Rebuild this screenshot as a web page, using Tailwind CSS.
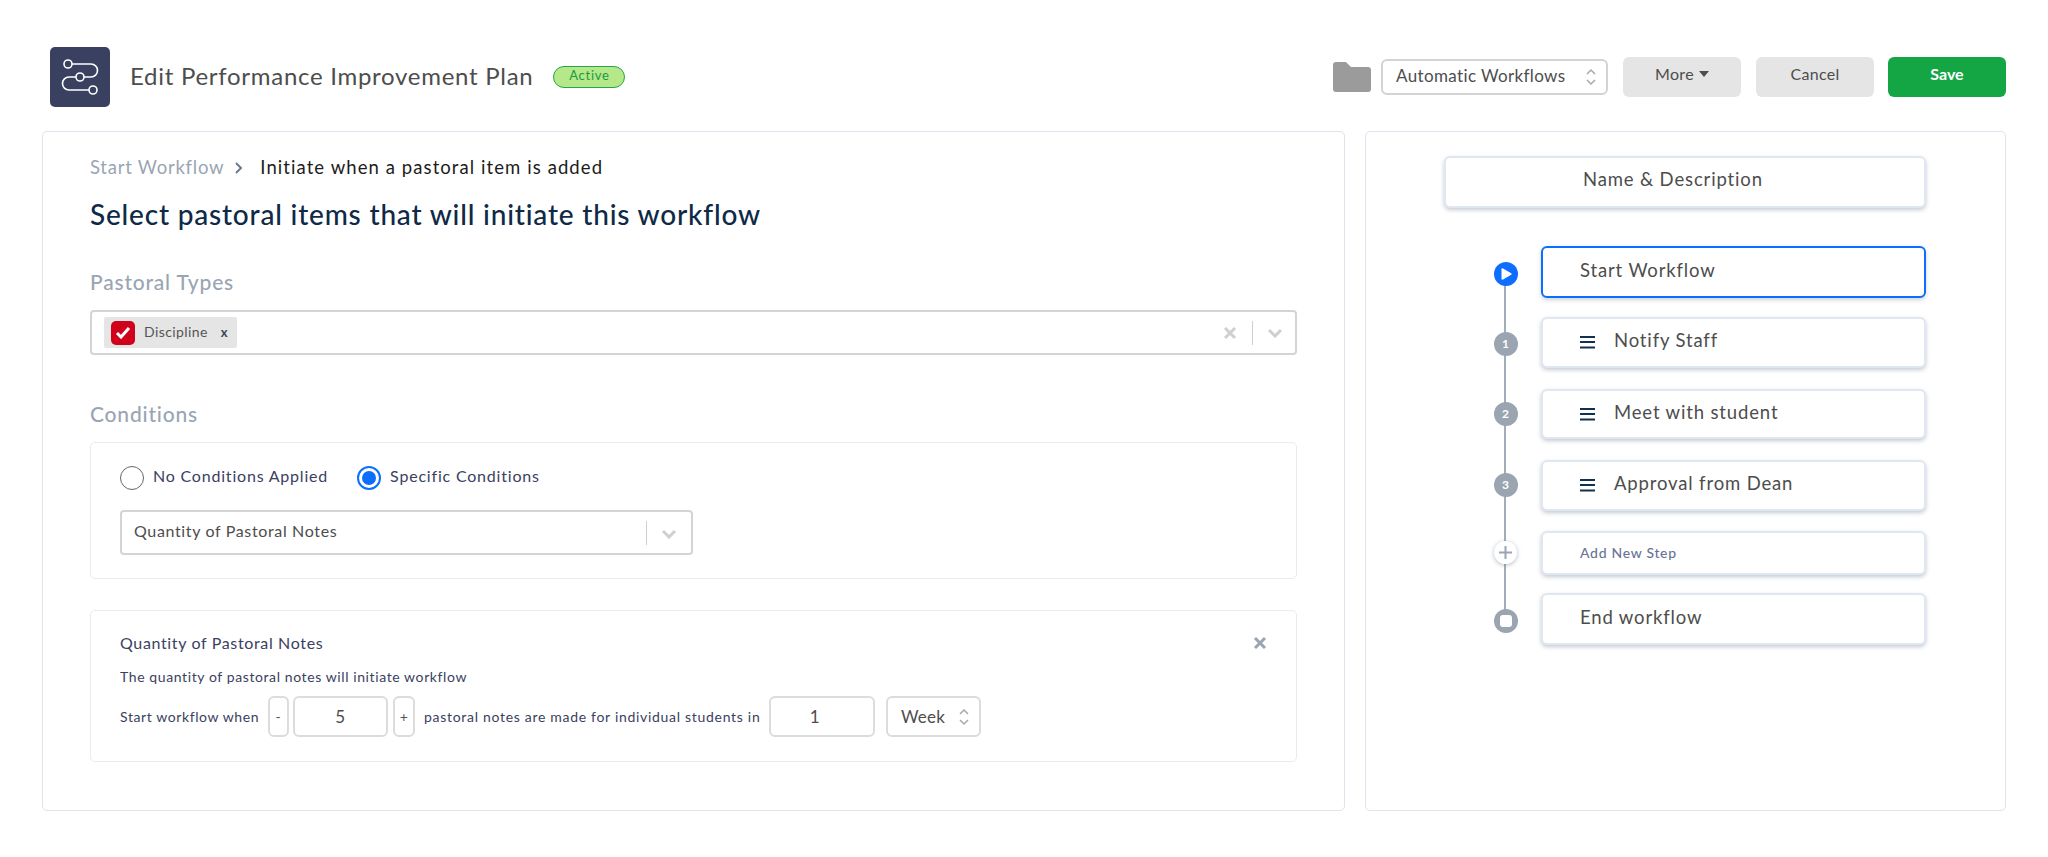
<!DOCTYPE html>
<html lang="en">
<head>
<meta charset="utf-8">
<title>Edit Performance Improvement Plan</title>
<script src="https://cdn.jsdelivr.net/npm/@tailwindcss/browser@4"></script>
</head>
<body class="bg-white font-[Lato,sans-serif] text-[#4a4a4a]">
<div class="w-[2048px] h-[857px] overflow-hidden px-[42px] pt-[47px]">
  <header class="flex items-center h-[60px] mb-[24px]">
    <div class="w-[60px] h-[60px] ml-[8px] rounded-[5px] bg-[#3a4160] flex items-center justify-center shrink-0">
      <svg width="60" height="60" viewBox="0 0 60 60" fill="none" stroke="#fff" stroke-width="1.6"><circle cx="18" cy="17" r="4"/><circle cx="30" cy="30" r="4"/><circle cx="43" cy="43" r="4"/><path d="M22 17H41a6.5 6.5 0 0 1 0 13H34M26 30H19a6.5 6.5 0 0 0 0 13H39"/></svg>
    </div>
    <h1 class="ml-[20px] -mt-[3px] text-[24px] tracking-[0.72px] text-[#4d4d4d] whitespace-nowrap">Edit Performance Improvement Plan</h1>
    <span class="ml-[20px] w-[72px] h-[22px] rounded-full border border-[#22a84a] bg-[#b6e789] text-[#169c43] text-[13px] leading-[17px] tracking-[0.7px] text-center">Active</span>
    <div class="ml-auto flex items-center">
      <svg width="38" height="30" viewBox="0 0 38 30" fill="#9b9b9b"><path d="M0 3a3 3 0 0 1 3-3h10l5 5h17a3 3 0 0 1 3 3v19a3 3 0 0 1-3 3H3a3 3 0 0 1-3-3z"/></svg>
      <div class="ml-[10px] w-[227px] h-[36px] rounded-[6px] border-2 border-[#d3d3d3] flex items-center justify-between pl-[13px] pr-[9px] text-[17px] tracking-[0.37px] text-[#4d4d4d]">
        <span class="-mt-[2px]">Automatic Workflows</span>
        <svg width="12" height="20" viewBox="0 0 12 20" fill="none" stroke="#a8a8a8" stroke-width="1.5"><path d="M2 7l4-4 4 4M2 13l4 4 4-4"/></svg>
      </div>
      <div class="ml-[15px] w-[118px] h-[40px] rounded-[6px] bg-[#e5e5e5] flex items-center justify-center gap-[5px] pb-[6px] text-[16px] tracking-[0.3px] text-[#4d4d4d]">More<svg width="10" height="6" viewBox="0 0 10 6" fill="#4d4d4d"><path d="M0 0h10L5 6z"/></svg></div>
      <div class="ml-[15px] w-[118px] h-[40px] rounded-[6px] bg-[#e5e5e5] flex items-center justify-center pb-[6px] text-[16px] tracking-[0.3px] text-[#4d4d4d]">Cancel</div>
      <div class="ml-[14px] w-[118px] h-[40px] rounded-[6px] bg-[#14a544] flex items-center justify-center pb-[6px] text-[16px] font-bold text-white">Save</div>
    </div>
  </header>

  <div class="flex gap-[20px] h-[680px]">
    <main class="w-[1303px] rounded-[5px] border border-[#dde4ee] pt-[24px] px-[47px]">
      <div class="flex items-center h-[24px] text-[18.5px] tracking-[0.75px] whitespace-nowrap">
        <span class="text-[#9aa5b4]">Start Workflow</span>
        <svg class="ml-[10px] mr-[16px]" width="10" height="14" viewBox="0 0 10 14" fill="none" stroke="#6c7a90" stroke-width="2"><path d="M2 2l5 5-5 5"/></svg>
        <span class="text-[#1c1c1c] tracking-[1.08px]">Initiate when a pastoral item is added</span>
      </div>
      <h2 class="mt-[16px] text-[28px] leading-[36px] tracking-[0.8px] font-medium text-[#0e2a47] whitespace-nowrap">Select pastoral items that will initiate this workflow</h2>

      <div class="mt-[38px] text-[21px] leading-[24px] tracking-[0.8px] font-medium text-[#9aa5b4]">Pastoral Types</div>
      <div class="mt-[16px] h-[45px] rounded-[4px] border-2 border-[#d4d4d4] flex items-center pl-[12px] pr-[12px]">
        <div class="w-[133px] h-[31px] rounded-[2px] bg-[#e5e5e5] flex items-center pl-[7px]">
          <span class="w-[24px] h-[24px] rounded-[5px] bg-[#d0021b] flex items-center justify-center">
            <svg width="16" height="14" viewBox="0 0 16 14" fill="none" stroke="#fff" stroke-width="3"><path d="M2 7l4 4 8-9"/></svg>
          </span>
          <span class="ml-[9px] -mt-[2px] text-[14px] tracking-[0.4px] text-[#555]">Discipline</span>
          <span class="ml-[13px] text-[13px] font-bold text-[#3d4660]">x</span>
        </div>
        <div class="ml-auto flex items-center">
          <svg width="14" height="14" viewBox="0 0 14 14" fill="none" stroke="#cfcfcf" stroke-width="3"><path d="M2 2l10 10M12 2L2 12"/></svg>
          <span class="ml-[15px] w-px h-[24px] bg-[#cfcfcf]"></span>
          <svg class="ml-[14px]" width="16" height="10" viewBox="0 0 16 10" fill="none" stroke="#cfcfcf" stroke-width="3"><path d="M2 2l6 6 6-6"/></svg>
        </div>
      </div>

      <div class="mt-[47px] text-[21px] leading-[24px] tracking-[0.8px] font-medium text-[#9aa5b4]">Conditions</div>
      <section class="mt-[16px] h-[137px] rounded-[5px] border border-[#e8ecf2] pt-[23px] pl-[29px]">
        <div class="flex items-center h-[24px] text-[16px] tracking-[0.8px] text-[#3a4160] whitespace-nowrap">
          <span class="w-[24px] h-[24px] rounded-full border border-[#666]"></span>
          <span class="ml-[9px] -mt-[5px]">No Conditions Applied</span>
          <span class="ml-[29px] w-[24px] h-[24px] rounded-full border-2 border-[#0d6efd] flex items-center justify-center"><span class="w-[14px] h-[14px] rounded-full bg-[#0d6efd]"></span></span>
          <span class="ml-[9px] -mt-[5px]">Specific Conditions</span>
        </div>
        <div class="mt-[20px] w-[573px] h-[45px] rounded-[4px] border-2 border-[#d4d4d4] flex items-center pl-[12px] pr-[14px] text-[16px] tracking-[0.65px] text-[#4d4d4d]">
          <span class="-mt-[3px]">Quantity of Pastoral Notes</span>
          <span class="ml-auto w-px h-[24px] bg-[#cfcfcf]"></span>
          <svg class="ml-[14px] mt-[2px]" width="16" height="10" viewBox="0 0 16 10" fill="none" stroke="#cfcfcf" stroke-width="3"><path d="M2 2l6 6 6-6"/></svg>
        </div>
      </section>

      <section class="mt-[31px] h-[152px] rounded-[5px] border border-[#e8ecf2] pt-[22px] pl-[29px] pr-[29px] text-[#3a4160]">
        <div class="flex items-center justify-between h-[20px] text-[16px] tracking-[0.65px]">
          <span>Quantity of Pastoral Notes</span>
          <svg width="14" height="14" viewBox="0 0 14 14" fill="none" stroke="#9aa5b4" stroke-width="3"><path d="M2 2l10 10M12 2L2 12"/></svg>
        </div>
        <div class="mt-[15px] text-[14px] leading-[18px] tracking-[0.6px]">The quantity of pastoral notes will initiate workflow</div>
        <div class="mt-[10px] flex items-center h-[41px] text-[14px] tracking-[0.6px] whitespace-nowrap">
          <span class="w-[138px]">Start workflow when</span>
          <span class="ml-[10px] w-[21px] h-[41px] rounded-[6px] border-2 border-[#dcdcdc] flex items-center justify-center text-[#555]">-</span>
          <span class="ml-[4px] w-[95px] h-[41px] rounded-[6px] border-2 border-[#dcdcdc] flex items-center justify-center text-[17px] text-[#4d4d4d]">5</span>
          <span class="ml-[5px] w-[22px] h-[41px] rounded-[6px] border-2 border-[#dcdcdc] flex items-center justify-center text-[#555]">+</span>
          <span class="ml-[9px] w-[336px] tracking-[0.7px]">pastoral notes are made for individual students in</span>
          <span class="ml-[9px] w-[106px] h-[41px] rounded-[6px] border-2 border-[#dcdcdc] flex items-center justify-center pr-[14px] text-[17px] text-[#4d4d4d]">1</span>
          <span class="ml-[11px] w-[95px] h-[41px] rounded-[6px] border-2 border-[#dcdcdc] flex items-center justify-between pl-[13px] pr-[9px] text-[17px] tracking-[0.2px] text-[#4d4d4d]">Week<svg width="12" height="20" viewBox="0 0 12 20" fill="none" stroke="#a8a8a8" stroke-width="1.5"><path d="M2 7l4-4 4 4M2 13l4 4 4-4"/></svg></span>
        </div>
      </section>
    </main>

    <aside class="w-[641px] rounded-[5px] border border-[#dde4ee] pt-[24px] pl-[78px]">
      <div class="w-[482px] h-[52px] rounded-[6px] border-2 border-[#e1e7f0] bg-white shadow-[0_2px_4px_rgba(90,105,130,0.35)] flex items-center pb-[4px] pl-[137px] text-[18.5px] tracking-[0.85px] text-[#4d4d4d]">Name &amp; Description</div>
      <div class="relative mt-[38px] ml-[97px] w-[385px]">
        <div class="absolute left-[-37px] top-[28px] w-[2px] h-[347px] bg-[#a3adb9]"></div>

        <div class="relative h-[52px] rounded-[6px] border-2 border-[#0d6efd] bg-white shadow-[0_2px_4px_rgba(90,105,130,0.3)] flex items-center pb-[3px] pl-[37px] text-[18.5px] tracking-[0.85px] text-[#4d4d4d]">
          <span class="absolute left-[-49px] top-[14px] w-[24px] h-[24px] rounded-full bg-[#0d6efd] flex items-center justify-center"><svg width="14" height="14" viewBox="0 0 14 14" fill="#fff"><path d="M2.5 2.2a1 1 0 0 1 1.500-.8l8.200 4.800a1 1 0 0 1 0 1.600L4 12.600a1 1 0 0 1-1.500-.8z"/></svg></span>
          Start Workflow
        </div>
        <div class="relative mt-[19px] h-[51px] rounded-[6px] border-2 border-[#e1e7f0] bg-white shadow-[0_2px_4px_rgba(90,105,130,0.35)] flex items-center pb-[3px] pl-[37px] text-[18.5px] tracking-[0.85px] text-[#4d4d4d]">
          <span class="absolute left-[-49px] top-[13px] w-[24px] h-[24px] rounded-full bg-[#9aa5b1] flex items-center justify-center text-[12px] font-bold text-white">1</span>
          <svg class="mt-[3px]" width="15" height="13" viewBox="0 0 15 13" fill="#12304f"><path d="M0 0h15v2H0zM0 5h15v2H0zM0 10.500h15v2H0z"/></svg>
          <span class="ml-[19px]">Notify Staff</span>
        </div>
        <div class="relative mt-[21px] h-[50px] rounded-[6px] border-2 border-[#e1e7f0] bg-white shadow-[0_2px_4px_rgba(90,105,130,0.35)] flex items-center pb-[3px] pl-[37px] text-[18.5px] tracking-[0.85px] text-[#4d4d4d]">
          <span class="absolute left-[-49px] top-[11px] w-[24px] h-[24px] rounded-full bg-[#9aa5b1] flex items-center justify-center text-[12px] font-bold text-white">2</span>
          <svg class="mt-[3px]" width="15" height="13" viewBox="0 0 15 13" fill="#12304f"><path d="M0 0h15v2H0zM0 5h15v2H0zM0 10.500h15v2H0z"/></svg>
          <span class="ml-[19px]">Meet with student</span>
        </div>
        <div class="relative mt-[21px] h-[51px] rounded-[6px] border-2 border-[#e1e7f0] bg-white shadow-[0_2px_4px_rgba(90,105,130,0.35)] flex items-center pb-[3px] pl-[37px] text-[18.5px] tracking-[0.85px] text-[#4d4d4d]">
          <span class="absolute left-[-49px] top-[11px] w-[24px] h-[24px] rounded-full bg-[#9aa5b1] flex items-center justify-center text-[12px] font-bold text-white">3</span>
          <svg class="mt-[3px]" width="15" height="13" viewBox="0 0 15 13" fill="#12304f"><path d="M0 0h15v2H0zM0 5h15v2H0zM0 10.500h15v2H0z"/></svg>
          <span class="ml-[19px]">Approval from Dean</span>
        </div>
        <div class="relative mt-[20px] h-[44px] rounded-[6px] border-2 border-[#e1e7f0] bg-white shadow-[0_2px_4px_rgba(90,105,130,0.35)] flex items-center pb-[2px] pl-[37px] text-[14px] tracking-[0.7px] font-medium text-[#6b7394]">
          <span class="absolute left-[-49px] top-[8px] w-[23px] h-[23px] rounded-full bg-white shadow-[0_1px_4px_rgba(90,105,130,0.45)] flex items-center justify-center"><svg width="13" height="13" viewBox="0 0 13 13" fill="none" stroke="#9aa5b1" stroke-width="2"><path d="M6.500 0v13M0 6.500h13"/></svg></span>
          Add New Step
        </div>
        <div class="relative mt-[18px] h-[52px] rounded-[6px] border-2 border-[#e1e7f0] bg-white shadow-[0_2px_4px_rgba(90,105,130,0.35)] flex items-center pb-[3px] pl-[37px] text-[18.5px] tracking-[0.85px] text-[#4d4d4d]">
          <span class="absolute left-[-49px] top-[14px] w-[24px] h-[24px] rounded-full bg-[#9aa5b1] flex items-center justify-center"><span class="w-[12px] h-[12px] rounded-[3px] bg-white"></span></span>
          End workflow
        </div>
      </div>
    </aside>
  </div>
</div>
</body>
</html>
